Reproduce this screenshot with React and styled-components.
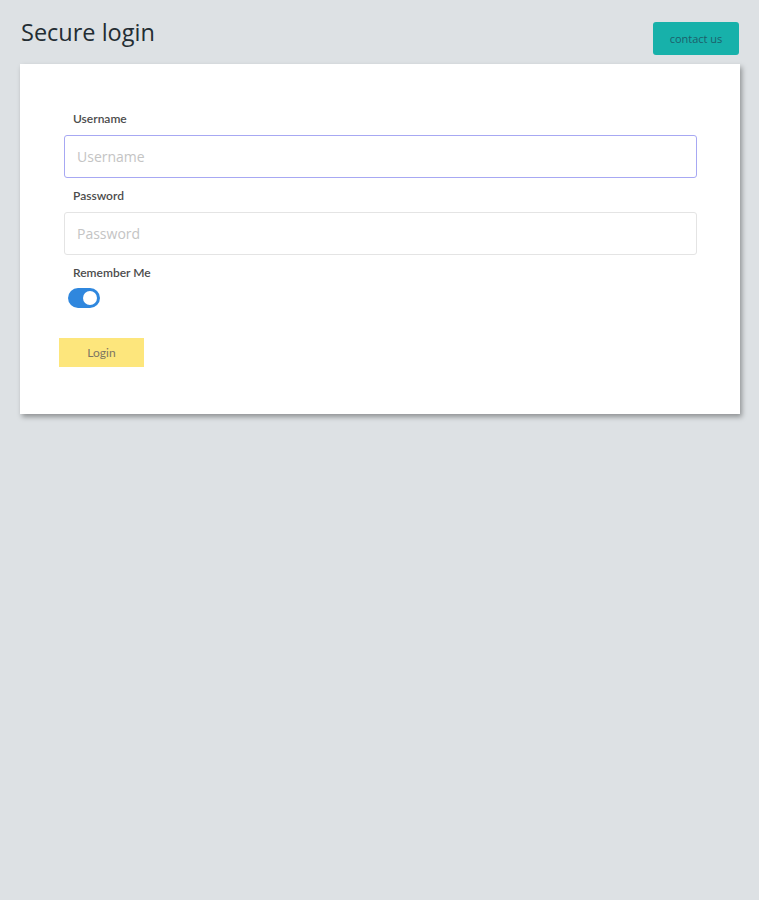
import styled, { createGlobalStyle } from 'styled-components';

const GlobalStyle = createGlobalStyle`
  html, body {
    margin: 0;
    padding: 0;
    background: #dde1e4;
    height: 100%;
  }
  body {
    font-family: 'Open Sans', 'Noto Sans', sans-serif;
  }
`;

const Page = styled.div`
  min-height: 900px;
  background: #dde1e4;
  padding: 16px 20px 0 20px;
  box-sizing: border-box;
`;

const Header = styled.header`
  display: flex;
  justify-content: space-between;
  align-items: flex-start;
  height: 48px;
`;

const Title = styled.h1`
  margin: 0;
  padding-left: 1px;
  font-family: 'Open Sans', sans-serif;
  font-weight: 500;
  font-size: 23.5px;
  line-height: 32px;
  color: #232d33;
`;

const ContactButton = styled.button`
  margin-top: 6px;
  width: 86px;
  height: 33px;
  border: none;
  border-radius: 3px;
  background: #17b1aa;
  color: #1d5f6a;
  font-family: 'Open Sans', sans-serif;
  font-size: 11px;
  cursor: pointer;
`;

const Card = styled.section`
  width: 720px;
  box-sizing: border-box;
  background: #ffffff;
  box-shadow: 2px 3px 5px rgba(0, 0, 0, 0.35);
  padding: 48px 43px 47px 39px;
`;

const Field = styled.div`
  display: flex;
  flex-direction: column;
  padding-left: 5px;
`;

const Label = styled.label`
  font-family: Lato, sans-serif;
  font-weight: 600;
  font-size: 12px;
  line-height: 14px;
  color: #4c4c4c;
  padding-left: 9px;
  margin-bottom: ${p => p.$gap || 9}px;
`;

const Input = styled.input`
  height: 43px;
  box-sizing: border-box;
  border: 1px solid ${p => (p.$focused ? '#a7a8f3' : '#e4e4e4')};
  border-radius: 3px;
  padding: 0 12px;
  font-family: 'Open Sans', sans-serif;
  font-size: 14px;
  color: #333;
  margin-bottom: 11px;
  outline: none;
  &::placeholder {
    color: #c4c4c4;
  }
`;

const Toggle = styled.span`
  display: inline-flex;
  align-items: center;
  justify-content: flex-end;
  width: 32px;
  height: 20px;
  box-sizing: border-box;
  padding: 3px;
  margin-left: 4px;
  border-radius: 10px;
  background: #2f87de;
`;

const Knob = styled.span`
  width: 14px;
  height: 14px;
  border-radius: 50%;
  background: #ffffff;
`;

const LoginButton = styled.button`
  margin-top: 30px;
  width: 85px;
  height: 29px;
  border: none;
  background: #fde67c;
  color: #7d7563;
  font-family: Lato, sans-serif;
  font-size: 12px;
  cursor: pointer;
`;

export default function App() {
  return (
    <>
      <GlobalStyle />
      <Page>
        <Header>
          <Title>Secure login</Title>
          <ContactButton>contact us</ContactButton>
        </Header>
        <Card>
          <Field>
            <Label>Username</Label>
            <Input $focused placeholder="Username" />
            <Label>Password</Label>
            <Input type="password" placeholder="Password" />
            <Label $gap={8}>Remember Me</Label>
            <Toggle>
              <Knob />
            </Toggle>
          </Field>
          <LoginButton>Login</LoginButton>
        </Card>
      </Page>
    </>
  );
}
